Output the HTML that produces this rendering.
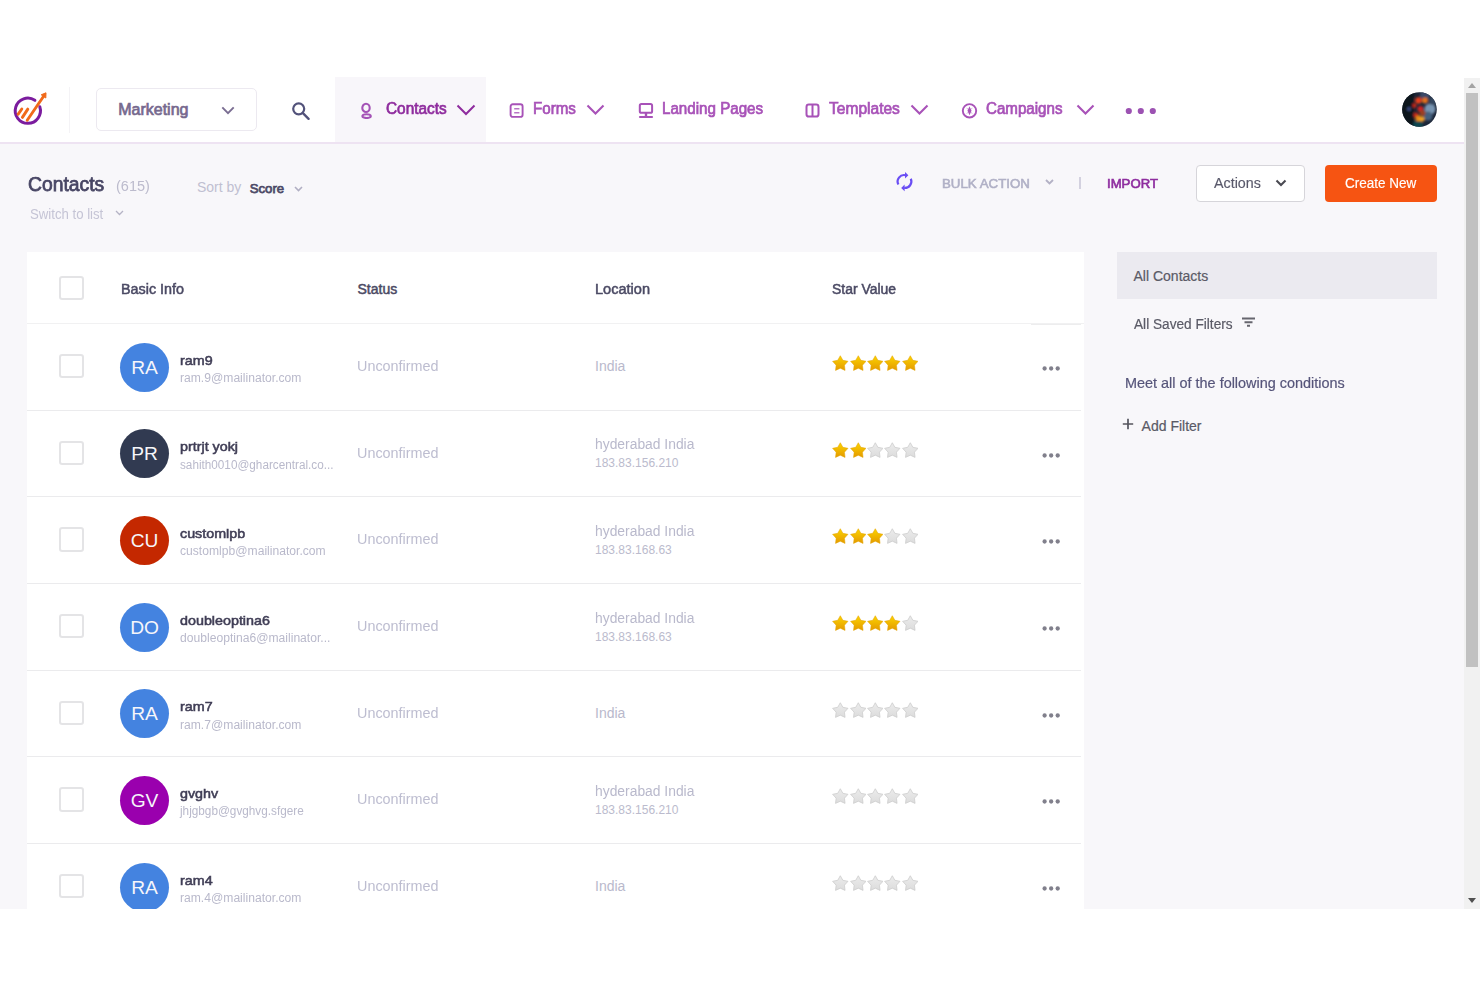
<!DOCTYPE html>
<html><head><meta charset="utf-8">
<style>
*{margin:0;padding:0;box-sizing:border-box}
html,body{width:1480px;height:987px;overflow:hidden;background:#fff;font-family:"Liberation Sans",sans-serif}
.a{position:absolute}
.t{position:absolute;white-space:nowrap}
#pg{position:absolute;left:0;top:78px;width:1464px;height:831px;background:#f8f7fa}
.cb{position:absolute;left:59.2px;width:24.4px;height:24.4px;border:2.2px solid #e4e4e6;border-radius:3.2px;background:#fff}
.av{position:absolute;left:120px;width:49px;height:49px;border-radius:50%;color:#f6f6fa;font-size:19.2px;text-align:center;line-height:50.5px;letter-spacing:-0.1px}
</style></head><body>
<svg width="0" height="0" style="position:absolute"><defs>
<linearGradient id="gold" x1="0" y1="0" x2="0" y2="1"><stop offset="0" stop-color="#fcd400"/><stop offset="1" stop-color="#e49a00"/></linearGradient>
<linearGradient id="grey" x1="0" y1="0" x2="0" y2="1"><stop offset="0" stop-color="#ececec"/><stop offset="1" stop-color="#dcdcdc"/></linearGradient>
</defs></svg>
<div id="pg"></div>
<div class="a" style="left:0;top:78px;width:1464px;height:64px;background:#fff"></div>
<div class="a" style="left:0;top:142px;width:1464px;height:1.6px;background:#eee3f2"></div>
<svg class="a" style="left:11.2px;top:92px" width="36" height="36" viewBox="0 0 36 36">
 <path d="M23.9 8.3 A12.6 12.6 0 1 0 28.8 14.8" fill="none" stroke="#7b1c9e" stroke-width="3" stroke-linecap="round"/>
 <path d="M7.2 22.2 L10.8 17 M11.4 25.4 L16.8 17.1 M16.2 28.2 L32.8 4" stroke="#f06a1a" stroke-width="2.9" stroke-linecap="round"/>
 <path d="M35 0.8 L34.8 6 L30.2 2.8 Z" fill="#f06a1a" stroke="#f06a1a" stroke-width="1" stroke-linejoin="round"/>
</svg>
<div class="a" style="left:69px;top:87px;width:1px;height:46px;background:#f4f3f6"></div>
<div class="a" style="left:96px;top:88px;width:161px;height:43px;border:1.5px solid #ece9f0;border-radius:5px;background:#fff"></div>
<div class="t" style="left:118.2px;top:100.86px;font-size:16px;line-height:18.4px;font-weight:normal;color:#76698e;-webkit-text-stroke:0.70px #76698e;">Marketing</div>
<svg class="a" style="left:220.5px;top:106.4px" width="15" height="9" viewBox="0 0 15 9"><path d="M1.3 1.3 L7 7.2 L12.7 1.3" fill="none" stroke="#7a6d92" stroke-width="1.9"/></svg>
<svg class="a" style="left:291px;top:102px" width="20" height="19" viewBox="0 0 20 19"><circle cx="7.7" cy="6.8" r="5.5" fill="none" stroke="#52527a" stroke-width="2.2"/><path d="M11.9 11.2 L17.6 16.8" stroke="#52527a" stroke-width="2.4" stroke-linecap="round"/></svg>
<div class="a" style="left:335px;top:77px;width:151px;height:65px;background:#f8f6fa"></div>
<svg class="a" style="left:360px;top:102px" width="13" height="17" viewBox="0 0 13 17"><ellipse cx="6" cy="5.9" rx="3.7" ry="4.1" fill="none" stroke="#a452b6" stroke-width="2.1"/><ellipse cx="6.6" cy="14.1" rx="4.2" ry="1.9" fill="none" stroke="#a452b6" stroke-width="2.1"/></svg>
<div class="t" style="left:386px;top:100.26px;font-size:16px;line-height:18.4px;font-weight:normal;color:#8f2c9e;transform:scaleX(0.96);transform-origin:0 0;-webkit-text-stroke:0.70px #8f2c9e;">Contacts</div>
<svg class="a" style="left:456px;top:104px" width="20" height="12" viewBox="0 0 20 12"><path d="M1.5 1.5 L10 10 L18.5 1.5" fill="none" stroke="#8f2c9e" stroke-width="2"/></svg>
<svg class="a" style="left:509px;top:103px" width="15" height="15" viewBox="0 0 15 15"><rect x="1.6" y="1.3" width="12" height="12.6" rx="2.2" fill="none" stroke="#a852b8" stroke-width="1.9"/><path d="M5.2 5.7h5.2M5.2 9.7h5.2" stroke="#a852b8" stroke-width="1.4" opacity=".8"/></svg>
<div class="t" style="left:532.8px;top:100.26px;font-size:16px;line-height:18.4px;font-weight:normal;color:#a852b8;transform:scaleX(0.945);transform-origin:0 0;-webkit-text-stroke:0.70px #a852b8;">Forms</div>
<svg class="a" style="left:586px;top:104.4px" width="19" height="11" viewBox="0 0 19 11"><path d="M1.5 1.5 L9.5 9.5 L17.5 1.5" fill="none" stroke="#a852b8" stroke-width="2.1"/></svg>
<svg class="a" style="left:637px;top:103px" width="17" height="16" viewBox="0 0 17 16"><rect x="2.8" y="1.1" width="12.3" height="8.7" rx="1.6" fill="none" stroke="#a852b8" stroke-width="2"/><path d="M9 10v3.5" stroke="#a852b8" stroke-width="2.4"/><path d="M3 14H15" stroke="#a852b8" stroke-width="2.2" stroke-linecap="round"/></svg>
<div class="t" style="left:661.6px;top:100.26px;font-size:16px;line-height:18.4px;font-weight:normal;color:#a852b8;transform:scaleX(0.947);transform-origin:0 0;-webkit-text-stroke:0.70px #a852b8;">Landing Pages</div>
<svg class="a" style="left:805px;top:103px" width="15" height="15" viewBox="0 0 15 15"><rect x="1.5" y="1.6" width="12" height="12" rx="2.4" fill="none" stroke="#a852b8" stroke-width="2"/><path d="M7.5 1.6v12" stroke="#a852b8" stroke-width="2"/></svg>
<div class="t" style="left:829px;top:100.26px;font-size:16px;line-height:18.4px;font-weight:normal;color:#a852b8;transform:scaleX(0.972);transform-origin:0 0;-webkit-text-stroke:0.70px #a852b8;">Templates</div>
<svg class="a" style="left:910px;top:104.4px" width="19" height="11" viewBox="0 0 19 11"><path d="M1.5 1.5 L9.5 9.5 L17.5 1.5" fill="none" stroke="#a852b8" stroke-width="2.1"/></svg>
<svg class="a" style="left:961px;top:102px" width="17" height="17" viewBox="0 0 17 17"><circle cx="8.5" cy="8.8" r="6.7" fill="none" stroke="#a852b8" stroke-width="1.9"/><path d="M8.5 4.3L10.5 8.8 8.5 13.3 6.5 8.8Z" fill="#a852b8"/><path d="M5.6 6.2l2 1.2M11.4 6.2l-2 1.2M5.6 11.4l2-1.2M11.4 11.4l-2-1.2" stroke="#a852b8" stroke-width="1" opacity=".45"/></svg>
<div class="t" style="left:986px;top:100.26px;font-size:16px;line-height:18.4px;font-weight:normal;color:#a852b8;transform:scaleX(0.945);transform-origin:0 0;-webkit-text-stroke:0.70px #a852b8;">Campaigns</div>
<svg class="a" style="left:1076px;top:104.4px" width="19" height="11" viewBox="0 0 19 11"><path d="M1.5 1.5 L9.5 9.5 L17.5 1.5" fill="none" stroke="#a852b8" stroke-width="2.1"/></svg>
<svg class="a" style="left:1125px;top:106.8px" width="33" height="8" viewBox="0 0 33 8"><circle cx="3.8" cy="4" r="3.1" fill="#9c52b2"/><circle cx="15.8" cy="4" r="3.1" fill="#9c52b2"/><circle cx="27.8" cy="4" r="3.1" fill="#9c52b2"/></svg>
<svg class="a" style="left:1402px;top:92.3px" width="35" height="35" viewBox="0 0 35 35">
 <defs><clipPath id="ac"><circle cx="17.5" cy="17.5" r="17.3"/></clipPath><filter id="bl" x="-20%" y="-20%" width="140%" height="140%"><feGaussianBlur stdDeviation="1.3"/></filter></defs>
 <g clip-path="url(#ac)"><rect width="35" height="35" fill="#1d2638"/>
 <g filter="url(#bl)">
 <rect x="-2" y="-2" width="14" height="40" fill="#0e131f"/>
 <circle cx="23" cy="3" r="5" fill="#3a4a68"/>
 <circle cx="28" cy="17" r="5.5" fill="#7895b2"/><circle cx="26" cy="24" r="4.5" fill="#45617e"/><circle cx="31" cy="9" r="4" fill="#34465e"/>
 <circle cx="16" cy="33" r="5" fill="#0f4750"/><circle cx="7" cy="17" r="2" fill="#3a4a80"/>
 <circle cx="16.5" cy="8.5" r="3.2" fill="#e8401a"/><circle cx="23" cy="8.5" r="3" fill="#e2701c"/>
 <circle cx="12.5" cy="13.5" r="2.2" fill="#c02818"/><circle cx="18.5" cy="17" r="3" fill="#d02020"/>
 <circle cx="20.5" cy="21" r="3" fill="#9c4022"/><circle cx="14" cy="23" r="2.6" fill="#c42a18"/>
 <circle cx="16.5" cy="26.5" r="3" fill="#e88a18"/><circle cx="20" cy="27" r="2.6" fill="#f0a020"/>
 </g></g>
</svg>
<div class="t" style="left:27.8px;top:172.73px;font-size:19.5px;line-height:22.42px;font-weight:normal;color:#474564;transform:scaleX(0.99);transform-origin:0 0;-webkit-text-stroke:0.75px #474564;">Contacts</div>
<div class="t" style="left:116.2px;top:177.90px;font-size:14px;line-height:16.1px;font-weight:normal;color:#bcbbcd;transform:scaleX(1.035);transform-origin:0 0;">(615)</div>
<div class="t" style="left:197px;top:179.40px;font-size:14px;line-height:16.1px;font-weight:normal;color:#c0bfd1;">Sort by</div>
<div class="t" style="left:249.7px;top:180.64px;font-size:13.2px;line-height:15.18px;font-weight:normal;color:#4d4b68;-webkit-text-stroke:0.75px #4d4b68;">Score</div>
<svg class="a" style="left:294px;top:186.2px" width="9" height="6" viewBox="0 0 9 6"><path d="M1 1l3.5 3.5L8 1" fill="none" stroke="#b1afc3" stroke-width="1.6"/></svg>
<div class="t" style="left:29.8px;top:205.50px;font-size:14px;line-height:16.1px;font-weight:normal;color:#c5c4d5;transform:scaleX(0.942);transform-origin:0 0;">Switch to list</div>
<svg class="a" style="left:114.5px;top:210px" width="9" height="6" viewBox="0 0 9 6"><path d="M1 1l3.5 3.5L8 1" fill="none" stroke="#b5b3c5" stroke-width="1.3"/></svg>
<svg class="a" style="left:895px;top:171px" width="20" height="22" viewBox="0 0 20 22"><path d="M3.4 13.6A6.5 6.5 0 0 1 10.6 4.2" fill="none" stroke="#6a4ef4" stroke-width="2.2"/><path d="M15.8 7.8A6.5 6.5 0 0 1 9.2 16.9" fill="none" stroke="#6a4ef4" stroke-width="2.2"/><path d="M10 0.9L13.4 4.2 10 7.5Z" fill="#6a4ef4"/><path d="M9.6 13.6L6.2 16.9 9.6 20.2Z" fill="#6a4ef4"/></svg>
<div class="t" style="left:942.3px;top:175.86px;font-size:13.5px;line-height:15.52px;font-weight:normal;color:#b0b0c6;transform:scaleX(0.985);transform-origin:0 0;-webkit-text-stroke:0.60px #b0b0c6;">BULK ACTION</div>
<svg class="a" style="left:1045px;top:179px" width="9" height="6" viewBox="0 0 9 6"><path d="M1 1l3.5 3.5L8 1" fill="none" stroke="#b3b1c5" stroke-width="1.8"/></svg>
<div class="a" style="left:1079.2px;top:177px;width:1.8px;height:11.5px;background:#d3d1df"></div>
<div class="t" style="left:1106.8px;top:175.66px;font-size:13.5px;line-height:15.52px;font-weight:normal;color:#8e2d9f;transform:scaleX(0.975);transform-origin:0 0;-webkit-text-stroke:0.65px #8e2d9f;">IMPORT</div>
<div class="a" style="left:1195.5px;top:165px;width:109.5px;height:36.5px;border:1.8px solid #d6d5da;border-radius:4px;background:#fff"></div>
<div class="t" style="left:1214px;top:175.10px;font-size:14px;line-height:16.1px;font-weight:normal;color:#58586a;transform:scaleX(1.02);transform-origin:0 0;-webkit-text-stroke:0.15px #58586a;">Actions</div>
<svg class="a" style="left:1275px;top:179px" width="12" height="8" viewBox="0 0 12 8"><path d="M1.5 1.5l4.5 4.5 4.5-4.5" fill="none" stroke="#4a4a52" stroke-width="2.1"/></svg>
<div class="a" style="left:1325px;top:165px;width:111.5px;height:36.5px;border-radius:4px;background:#f65412"></div>
<div class="t" style="left:1344.7px;top:175.10px;font-size:14px;line-height:16.1px;font-weight:normal;color:#ffffff;transform:scaleX(0.965);transform-origin:0 0;-webkit-text-stroke:0.15px #ffffff;">Create New</div>
<div class="a" style="left:27px;top:252px;width:1057px;height:657px;background:#fff"></div>
<div class="a" style="left:27px;top:322.8px;width:1057px;height:1.4px;background:#f1f1f2"></div>
<div class="a" style="left:1031px;top:323.6px;width:50px;height:1.6px;background:#ededee"></div>
<div class="cb" style="top:275.5px"></div>
<div class="t" style="left:120.5px;top:280.70px;font-size:14px;line-height:16.1px;font-weight:normal;color:#4b4a64;transform:scaleX(1.025);transform-origin:0 0;-webkit-text-stroke:0.50px #4b4a64;">Basic Info</div>
<div class="t" style="left:357.5px;top:280.70px;font-size:14px;line-height:16.1px;font-weight:normal;color:#4b4a64;-webkit-text-stroke:0.50px #4b4a64;">Status</div>
<div class="t" style="left:595px;top:280.70px;font-size:14px;line-height:16.1px;font-weight:normal;color:#4b4a64;transform:scaleX(1.04);transform-origin:0 0;-webkit-text-stroke:0.50px #4b4a64;">Location</div>
<div class="t" style="left:832.2px;top:280.70px;font-size:14px;line-height:16.1px;font-weight:normal;color:#4b4a64;transform:scaleX(0.995);transform-origin:0 0;-webkit-text-stroke:0.50px #4b4a64;">Star Value</div>
<div class="cb" style="top:354.00px"></div>
<div class="av" style="top:342.50px;background:#4483e0">RA</div>
<div class="t" style="left:180px;top:352.66px;font-size:13.5px;line-height:15.52px;font-weight:normal;color:#403e56;transform:scaleX(1.06);transform-origin:0 0;-webkit-text-stroke:0.55px #403e56;">ram9</div>
<div class="t" style="left:180px;top:372.04px;font-size:12px;line-height:13.8px;font-weight:normal;color:#b9b9cb;transform:scaleX(1.01);transform-origin:0 0;">ram.9@mailinator.com</div>
<div class="t" style="left:356.6px;top:358.10px;font-size:14px;line-height:16.1px;font-weight:normal;color:#bdbdd0;transform:scaleX(1.027);transform-origin:0 0;">Unconfirmed</div>
<div class="t" style="left:595px;top:358.10px;font-size:14px;line-height:16.1px;font-weight:normal;color:#b9b9cc;">India</div>
<svg class="a" style="left:832.2px;top:354.8px" width="16.6" height="16" viewBox="0 0 24 23"><path d="M12.00 1.00 L15.70 7.60 L23.13 9.08 L17.99 14.65 L18.88 22.17 L12.00 19.00 L5.12 22.17 L6.01 14.65 L0.87 9.08 L8.30 7.60Z" fill="url(#gold)" stroke="#e3a400" stroke-width=".8" stroke-linejoin="round"/></svg>
<svg class="a" style="left:849.5px;top:354.8px" width="16.6" height="16" viewBox="0 0 24 23"><path d="M12.00 1.00 L15.70 7.60 L23.13 9.08 L17.99 14.65 L18.88 22.17 L12.00 19.00 L5.12 22.17 L6.01 14.65 L0.87 9.08 L8.30 7.60Z" fill="url(#gold)" stroke="#e3a400" stroke-width=".8" stroke-linejoin="round"/></svg>
<svg class="a" style="left:866.9px;top:354.8px" width="16.6" height="16" viewBox="0 0 24 23"><path d="M12.00 1.00 L15.70 7.60 L23.13 9.08 L17.99 14.65 L18.88 22.17 L12.00 19.00 L5.12 22.17 L6.01 14.65 L0.87 9.08 L8.30 7.60Z" fill="url(#gold)" stroke="#e3a400" stroke-width=".8" stroke-linejoin="round"/></svg>
<svg class="a" style="left:884.2px;top:354.8px" width="16.6" height="16" viewBox="0 0 24 23"><path d="M12.00 1.00 L15.70 7.60 L23.13 9.08 L17.99 14.65 L18.88 22.17 L12.00 19.00 L5.12 22.17 L6.01 14.65 L0.87 9.08 L8.30 7.60Z" fill="url(#gold)" stroke="#e3a400" stroke-width=".8" stroke-linejoin="round"/></svg>
<svg class="a" style="left:901.5px;top:354.8px" width="16.6" height="16" viewBox="0 0 24 23"><path d="M12.00 1.00 L15.70 7.60 L23.13 9.08 L17.99 14.65 L18.88 22.17 L12.00 19.00 L5.12 22.17 L6.01 14.65 L0.87 9.08 L8.30 7.60Z" fill="url(#gold)" stroke="#e3a400" stroke-width=".8" stroke-linejoin="round"/></svg>
<svg class="a" style="left:1042px;top:365.90px" width="19" height="5" viewBox="0 0 19 5"><circle cx="2.6" cy="2.5" r="2.15" fill="#81808c"/><circle cx="9.15" cy="2.5" r="2.15" fill="#81808c"/><circle cx="15.7" cy="2.5" r="2.15" fill="#81808c"/></svg>
<div class="a" style="left:27px;top:410px;width:1054px;height:1px;background:#ebebed"></div>
<div class="cb" style="top:440.67px"></div>
<div class="av" style="top:429.17px;background:#313a51">PR</div>
<div class="t" style="left:180px;top:439.33px;font-size:13.5px;line-height:15.52px;font-weight:normal;color:#403e56;transform:scaleX(1.06);transform-origin:0 0;-webkit-text-stroke:0.55px #403e56;">prtrjt yokj</div>
<div class="t" style="left:180px;top:458.71px;font-size:12px;line-height:13.8px;font-weight:normal;color:#b9b9cb;transform:scaleX(0.978);transform-origin:0 0;">sahith0010@gharcentral.co...</div>
<div class="t" style="left:356.6px;top:444.77px;font-size:14px;line-height:16.1px;font-weight:normal;color:#bdbdd0;transform:scaleX(1.027);transform-origin:0 0;">Unconfirmed</div>
<div class="t" style="left:594.6px;top:436.40px;font-size:14px;line-height:16.1px;font-weight:normal;color:#b9b9cc;transform:scaleX(0.99);transform-origin:0 0;">hyderabad India</div>
<div class="t" style="left:595px;top:457.24px;font-size:12px;line-height:13.8px;font-weight:normal;color:#bbbbcd;">183.83.156.210</div>
<svg class="a" style="left:832.2px;top:441.5px" width="16.6" height="16" viewBox="0 0 24 23"><path d="M12.00 1.00 L15.70 7.60 L23.13 9.08 L17.99 14.65 L18.88 22.17 L12.00 19.00 L5.12 22.17 L6.01 14.65 L0.87 9.08 L8.30 7.60Z" fill="url(#gold)" stroke="#e3a400" stroke-width=".8" stroke-linejoin="round"/></svg>
<svg class="a" style="left:849.5px;top:441.5px" width="16.6" height="16" viewBox="0 0 24 23"><path d="M12.00 1.00 L15.70 7.60 L23.13 9.08 L17.99 14.65 L18.88 22.17 L12.00 19.00 L5.12 22.17 L6.01 14.65 L0.87 9.08 L8.30 7.60Z" fill="url(#gold)" stroke="#e3a400" stroke-width=".8" stroke-linejoin="round"/></svg>
<svg class="a" style="left:866.9px;top:441.5px" width="16.6" height="16" viewBox="0 0 24 23"><path d="M12.00 1.00 L15.70 7.60 L23.13 9.08 L17.99 14.65 L18.88 22.17 L12.00 19.00 L5.12 22.17 L6.01 14.65 L0.87 9.08 L8.30 7.60Z" fill="url(#grey)" stroke="#cbcbcb" stroke-width="1.1" stroke-linejoin="round"/></svg>
<svg class="a" style="left:884.2px;top:441.5px" width="16.6" height="16" viewBox="0 0 24 23"><path d="M12.00 1.00 L15.70 7.60 L23.13 9.08 L17.99 14.65 L18.88 22.17 L12.00 19.00 L5.12 22.17 L6.01 14.65 L0.87 9.08 L8.30 7.60Z" fill="url(#grey)" stroke="#cbcbcb" stroke-width="1.1" stroke-linejoin="round"/></svg>
<svg class="a" style="left:901.5px;top:441.5px" width="16.6" height="16" viewBox="0 0 24 23"><path d="M12.00 1.00 L15.70 7.60 L23.13 9.08 L17.99 14.65 L18.88 22.17 L12.00 19.00 L5.12 22.17 L6.01 14.65 L0.87 9.08 L8.30 7.60Z" fill="url(#grey)" stroke="#cbcbcb" stroke-width="1.1" stroke-linejoin="round"/></svg>
<svg class="a" style="left:1042px;top:452.57px" width="19" height="5" viewBox="0 0 19 5"><circle cx="2.6" cy="2.5" r="2.15" fill="#81808c"/><circle cx="9.15" cy="2.5" r="2.15" fill="#81808c"/><circle cx="15.7" cy="2.5" r="2.15" fill="#81808c"/></svg>
<div class="a" style="left:27px;top:496px;width:1054px;height:1px;background:#ebebed"></div>
<div class="cb" style="top:527.34px"></div>
<div class="av" style="top:515.84px;background:#c42800">CU</div>
<div class="t" style="left:180px;top:526.00px;font-size:13.5px;line-height:15.52px;font-weight:normal;color:#403e56;transform:scaleX(1.06);transform-origin:0 0;-webkit-text-stroke:0.55px #403e56;">customlpb</div>
<div class="t" style="left:180px;top:545.38px;font-size:12px;line-height:13.8px;font-weight:normal;color:#b9b9cb;transform:scaleX(1.01);transform-origin:0 0;">customlpb@mailinator.com</div>
<div class="t" style="left:356.6px;top:531.44px;font-size:14px;line-height:16.1px;font-weight:normal;color:#bdbdd0;transform:scaleX(1.027);transform-origin:0 0;">Unconfirmed</div>
<div class="t" style="left:594.6px;top:523.07px;font-size:14px;line-height:16.1px;font-weight:normal;color:#b9b9cc;transform:scaleX(0.99);transform-origin:0 0;">hyderabad India</div>
<div class="t" style="left:595px;top:543.91px;font-size:12px;line-height:13.8px;font-weight:normal;color:#bbbbcd;">183.83.168.63</div>
<svg class="a" style="left:832.2px;top:528.1px" width="16.6" height="16" viewBox="0 0 24 23"><path d="M12.00 1.00 L15.70 7.60 L23.13 9.08 L17.99 14.65 L18.88 22.17 L12.00 19.00 L5.12 22.17 L6.01 14.65 L0.87 9.08 L8.30 7.60Z" fill="url(#gold)" stroke="#e3a400" stroke-width=".8" stroke-linejoin="round"/></svg>
<svg class="a" style="left:849.5px;top:528.1px" width="16.6" height="16" viewBox="0 0 24 23"><path d="M12.00 1.00 L15.70 7.60 L23.13 9.08 L17.99 14.65 L18.88 22.17 L12.00 19.00 L5.12 22.17 L6.01 14.65 L0.87 9.08 L8.30 7.60Z" fill="url(#gold)" stroke="#e3a400" stroke-width=".8" stroke-linejoin="round"/></svg>
<svg class="a" style="left:866.9px;top:528.1px" width="16.6" height="16" viewBox="0 0 24 23"><path d="M12.00 1.00 L15.70 7.60 L23.13 9.08 L17.99 14.65 L18.88 22.17 L12.00 19.00 L5.12 22.17 L6.01 14.65 L0.87 9.08 L8.30 7.60Z" fill="url(#gold)" stroke="#e3a400" stroke-width=".8" stroke-linejoin="round"/></svg>
<svg class="a" style="left:884.2px;top:528.1px" width="16.6" height="16" viewBox="0 0 24 23"><path d="M12.00 1.00 L15.70 7.60 L23.13 9.08 L17.99 14.65 L18.88 22.17 L12.00 19.00 L5.12 22.17 L6.01 14.65 L0.87 9.08 L8.30 7.60Z" fill="url(#grey)" stroke="#cbcbcb" stroke-width="1.1" stroke-linejoin="round"/></svg>
<svg class="a" style="left:901.5px;top:528.1px" width="16.6" height="16" viewBox="0 0 24 23"><path d="M12.00 1.00 L15.70 7.60 L23.13 9.08 L17.99 14.65 L18.88 22.17 L12.00 19.00 L5.12 22.17 L6.01 14.65 L0.87 9.08 L8.30 7.60Z" fill="url(#grey)" stroke="#cbcbcb" stroke-width="1.1" stroke-linejoin="round"/></svg>
<svg class="a" style="left:1042px;top:539.24px" width="19" height="5" viewBox="0 0 19 5"><circle cx="2.6" cy="2.5" r="2.15" fill="#81808c"/><circle cx="9.15" cy="2.5" r="2.15" fill="#81808c"/><circle cx="15.7" cy="2.5" r="2.15" fill="#81808c"/></svg>
<div class="a" style="left:27px;top:583px;width:1054px;height:1px;background:#ebebed"></div>
<div class="cb" style="top:614.01px"></div>
<div class="av" style="top:602.51px;background:#4483e0">DO</div>
<div class="t" style="left:180px;top:612.67px;font-size:13.5px;line-height:15.52px;font-weight:normal;color:#403e56;transform:scaleX(1.06);transform-origin:0 0;-webkit-text-stroke:0.55px #403e56;">doubleoptina6</div>
<div class="t" style="left:180px;top:632.05px;font-size:12px;line-height:13.8px;font-weight:normal;color:#b9b9cb;transform:scaleX(1.01);transform-origin:0 0;">doubleoptina6@mailinator...</div>
<div class="t" style="left:356.6px;top:618.11px;font-size:14px;line-height:16.1px;font-weight:normal;color:#bdbdd0;transform:scaleX(1.027);transform-origin:0 0;">Unconfirmed</div>
<div class="t" style="left:594.6px;top:609.74px;font-size:14px;line-height:16.1px;font-weight:normal;color:#b9b9cc;transform:scaleX(0.99);transform-origin:0 0;">hyderabad India</div>
<div class="t" style="left:595px;top:630.58px;font-size:12px;line-height:13.8px;font-weight:normal;color:#bbbbcd;">183.83.168.63</div>
<svg class="a" style="left:832.2px;top:614.8px" width="16.6" height="16" viewBox="0 0 24 23"><path d="M12.00 1.00 L15.70 7.60 L23.13 9.08 L17.99 14.65 L18.88 22.17 L12.00 19.00 L5.12 22.17 L6.01 14.65 L0.87 9.08 L8.30 7.60Z" fill="url(#gold)" stroke="#e3a400" stroke-width=".8" stroke-linejoin="round"/></svg>
<svg class="a" style="left:849.5px;top:614.8px" width="16.6" height="16" viewBox="0 0 24 23"><path d="M12.00 1.00 L15.70 7.60 L23.13 9.08 L17.99 14.65 L18.88 22.17 L12.00 19.00 L5.12 22.17 L6.01 14.65 L0.87 9.08 L8.30 7.60Z" fill="url(#gold)" stroke="#e3a400" stroke-width=".8" stroke-linejoin="round"/></svg>
<svg class="a" style="left:866.9px;top:614.8px" width="16.6" height="16" viewBox="0 0 24 23"><path d="M12.00 1.00 L15.70 7.60 L23.13 9.08 L17.99 14.65 L18.88 22.17 L12.00 19.00 L5.12 22.17 L6.01 14.65 L0.87 9.08 L8.30 7.60Z" fill="url(#gold)" stroke="#e3a400" stroke-width=".8" stroke-linejoin="round"/></svg>
<svg class="a" style="left:884.2px;top:614.8px" width="16.6" height="16" viewBox="0 0 24 23"><path d="M12.00 1.00 L15.70 7.60 L23.13 9.08 L17.99 14.65 L18.88 22.17 L12.00 19.00 L5.12 22.17 L6.01 14.65 L0.87 9.08 L8.30 7.60Z" fill="url(#gold)" stroke="#e3a400" stroke-width=".8" stroke-linejoin="round"/></svg>
<svg class="a" style="left:901.5px;top:614.8px" width="16.6" height="16" viewBox="0 0 24 23"><path d="M12.00 1.00 L15.70 7.60 L23.13 9.08 L17.99 14.65 L18.88 22.17 L12.00 19.00 L5.12 22.17 L6.01 14.65 L0.87 9.08 L8.30 7.60Z" fill="url(#grey)" stroke="#cbcbcb" stroke-width="1.1" stroke-linejoin="round"/></svg>
<svg class="a" style="left:1042px;top:625.91px" width="19" height="5" viewBox="0 0 19 5"><circle cx="2.6" cy="2.5" r="2.15" fill="#81808c"/><circle cx="9.15" cy="2.5" r="2.15" fill="#81808c"/><circle cx="15.7" cy="2.5" r="2.15" fill="#81808c"/></svg>
<div class="a" style="left:27px;top:670px;width:1054px;height:1px;background:#ebebed"></div>
<div class="cb" style="top:700.68px"></div>
<div class="av" style="top:689.18px;background:#4483e0">RA</div>
<div class="t" style="left:180px;top:699.34px;font-size:13.5px;line-height:15.52px;font-weight:normal;color:#403e56;transform:scaleX(1.06);transform-origin:0 0;-webkit-text-stroke:0.55px #403e56;">ram7</div>
<div class="t" style="left:180px;top:718.72px;font-size:12px;line-height:13.8px;font-weight:normal;color:#b9b9cb;transform:scaleX(1.01);transform-origin:0 0;">ram.7@mailinator.com</div>
<div class="t" style="left:356.6px;top:704.78px;font-size:14px;line-height:16.1px;font-weight:normal;color:#bdbdd0;transform:scaleX(1.027);transform-origin:0 0;">Unconfirmed</div>
<div class="t" style="left:595px;top:704.78px;font-size:14px;line-height:16.1px;font-weight:normal;color:#b9b9cc;">India</div>
<svg class="a" style="left:832.2px;top:701.5px" width="16.6" height="16" viewBox="0 0 24 23"><path d="M12.00 1.00 L15.70 7.60 L23.13 9.08 L17.99 14.65 L18.88 22.17 L12.00 19.00 L5.12 22.17 L6.01 14.65 L0.87 9.08 L8.30 7.60Z" fill="url(#grey)" stroke="#cbcbcb" stroke-width="1.1" stroke-linejoin="round"/></svg>
<svg class="a" style="left:849.5px;top:701.5px" width="16.6" height="16" viewBox="0 0 24 23"><path d="M12.00 1.00 L15.70 7.60 L23.13 9.08 L17.99 14.65 L18.88 22.17 L12.00 19.00 L5.12 22.17 L6.01 14.65 L0.87 9.08 L8.30 7.60Z" fill="url(#grey)" stroke="#cbcbcb" stroke-width="1.1" stroke-linejoin="round"/></svg>
<svg class="a" style="left:866.9px;top:701.5px" width="16.6" height="16" viewBox="0 0 24 23"><path d="M12.00 1.00 L15.70 7.60 L23.13 9.08 L17.99 14.65 L18.88 22.17 L12.00 19.00 L5.12 22.17 L6.01 14.65 L0.87 9.08 L8.30 7.60Z" fill="url(#grey)" stroke="#cbcbcb" stroke-width="1.1" stroke-linejoin="round"/></svg>
<svg class="a" style="left:884.2px;top:701.5px" width="16.6" height="16" viewBox="0 0 24 23"><path d="M12.00 1.00 L15.70 7.60 L23.13 9.08 L17.99 14.65 L18.88 22.17 L12.00 19.00 L5.12 22.17 L6.01 14.65 L0.87 9.08 L8.30 7.60Z" fill="url(#grey)" stroke="#cbcbcb" stroke-width="1.1" stroke-linejoin="round"/></svg>
<svg class="a" style="left:901.5px;top:701.5px" width="16.6" height="16" viewBox="0 0 24 23"><path d="M12.00 1.00 L15.70 7.60 L23.13 9.08 L17.99 14.65 L18.88 22.17 L12.00 19.00 L5.12 22.17 L6.01 14.65 L0.87 9.08 L8.30 7.60Z" fill="url(#grey)" stroke="#cbcbcb" stroke-width="1.1" stroke-linejoin="round"/></svg>
<svg class="a" style="left:1042px;top:712.58px" width="19" height="5" viewBox="0 0 19 5"><circle cx="2.6" cy="2.5" r="2.15" fill="#81808c"/><circle cx="9.15" cy="2.5" r="2.15" fill="#81808c"/><circle cx="15.7" cy="2.5" r="2.15" fill="#81808c"/></svg>
<div class="a" style="left:27px;top:756px;width:1054px;height:1px;background:#ebebed"></div>
<div class="cb" style="top:787.35px"></div>
<div class="av" style="top:775.85px;background:#9a00ae">GV</div>
<div class="t" style="left:180px;top:786.01px;font-size:13.5px;line-height:15.52px;font-weight:normal;color:#403e56;transform:scaleX(1.06);transform-origin:0 0;-webkit-text-stroke:0.55px #403e56;">gvghv</div>
<div class="t" style="left:180px;top:805.39px;font-size:12px;line-height:13.8px;font-weight:normal;color:#b9b9cb;transform:scaleX(0.98);transform-origin:0 0;">jhjgbgb@gvghvg.sfgere</div>
<div class="t" style="left:356.6px;top:791.45px;font-size:14px;line-height:16.1px;font-weight:normal;color:#bdbdd0;transform:scaleX(1.027);transform-origin:0 0;">Unconfirmed</div>
<div class="t" style="left:594.6px;top:783.08px;font-size:14px;line-height:16.1px;font-weight:normal;color:#b9b9cc;transform:scaleX(0.99);transform-origin:0 0;">hyderabad India</div>
<div class="t" style="left:595px;top:803.92px;font-size:12px;line-height:13.8px;font-weight:normal;color:#bbbbcd;">183.83.156.210</div>
<svg class="a" style="left:832.2px;top:788.1px" width="16.6" height="16" viewBox="0 0 24 23"><path d="M12.00 1.00 L15.70 7.60 L23.13 9.08 L17.99 14.65 L18.88 22.17 L12.00 19.00 L5.12 22.17 L6.01 14.65 L0.87 9.08 L8.30 7.60Z" fill="url(#grey)" stroke="#cbcbcb" stroke-width="1.1" stroke-linejoin="round"/></svg>
<svg class="a" style="left:849.5px;top:788.1px" width="16.6" height="16" viewBox="0 0 24 23"><path d="M12.00 1.00 L15.70 7.60 L23.13 9.08 L17.99 14.65 L18.88 22.17 L12.00 19.00 L5.12 22.17 L6.01 14.65 L0.87 9.08 L8.30 7.60Z" fill="url(#grey)" stroke="#cbcbcb" stroke-width="1.1" stroke-linejoin="round"/></svg>
<svg class="a" style="left:866.9px;top:788.1px" width="16.6" height="16" viewBox="0 0 24 23"><path d="M12.00 1.00 L15.70 7.60 L23.13 9.08 L17.99 14.65 L18.88 22.17 L12.00 19.00 L5.12 22.17 L6.01 14.65 L0.87 9.08 L8.30 7.60Z" fill="url(#grey)" stroke="#cbcbcb" stroke-width="1.1" stroke-linejoin="round"/></svg>
<svg class="a" style="left:884.2px;top:788.1px" width="16.6" height="16" viewBox="0 0 24 23"><path d="M12.00 1.00 L15.70 7.60 L23.13 9.08 L17.99 14.65 L18.88 22.17 L12.00 19.00 L5.12 22.17 L6.01 14.65 L0.87 9.08 L8.30 7.60Z" fill="url(#grey)" stroke="#cbcbcb" stroke-width="1.1" stroke-linejoin="round"/></svg>
<svg class="a" style="left:901.5px;top:788.1px" width="16.6" height="16" viewBox="0 0 24 23"><path d="M12.00 1.00 L15.70 7.60 L23.13 9.08 L17.99 14.65 L18.88 22.17 L12.00 19.00 L5.12 22.17 L6.01 14.65 L0.87 9.08 L8.30 7.60Z" fill="url(#grey)" stroke="#cbcbcb" stroke-width="1.1" stroke-linejoin="round"/></svg>
<svg class="a" style="left:1042px;top:799.25px" width="19" height="5" viewBox="0 0 19 5"><circle cx="2.6" cy="2.5" r="2.15" fill="#81808c"/><circle cx="9.15" cy="2.5" r="2.15" fill="#81808c"/><circle cx="15.7" cy="2.5" r="2.15" fill="#81808c"/></svg>
<div class="a" style="left:27px;top:843px;width:1054px;height:1px;background:#ebebed"></div>
<div class="cb" style="top:874.02px"></div>
<div class="av" style="top:862.52px;background:#4483e0">RA</div>
<div class="t" style="left:180px;top:872.68px;font-size:13.5px;line-height:15.52px;font-weight:normal;color:#403e56;transform:scaleX(1.06);transform-origin:0 0;-webkit-text-stroke:0.55px #403e56;">ram4</div>
<div class="t" style="left:180px;top:892.06px;font-size:12px;line-height:13.8px;font-weight:normal;color:#b9b9cb;transform:scaleX(1.01);transform-origin:0 0;">ram.4@mailinator.com</div>
<div class="t" style="left:356.6px;top:878.12px;font-size:14px;line-height:16.1px;font-weight:normal;color:#bdbdd0;transform:scaleX(1.027);transform-origin:0 0;">Unconfirmed</div>
<div class="t" style="left:595px;top:878.12px;font-size:14px;line-height:16.1px;font-weight:normal;color:#b9b9cc;">India</div>
<svg class="a" style="left:832.2px;top:874.8px" width="16.6" height="16" viewBox="0 0 24 23"><path d="M12.00 1.00 L15.70 7.60 L23.13 9.08 L17.99 14.65 L18.88 22.17 L12.00 19.00 L5.12 22.17 L6.01 14.65 L0.87 9.08 L8.30 7.60Z" fill="url(#grey)" stroke="#cbcbcb" stroke-width="1.1" stroke-linejoin="round"/></svg>
<svg class="a" style="left:849.5px;top:874.8px" width="16.6" height="16" viewBox="0 0 24 23"><path d="M12.00 1.00 L15.70 7.60 L23.13 9.08 L17.99 14.65 L18.88 22.17 L12.00 19.00 L5.12 22.17 L6.01 14.65 L0.87 9.08 L8.30 7.60Z" fill="url(#grey)" stroke="#cbcbcb" stroke-width="1.1" stroke-linejoin="round"/></svg>
<svg class="a" style="left:866.9px;top:874.8px" width="16.6" height="16" viewBox="0 0 24 23"><path d="M12.00 1.00 L15.70 7.60 L23.13 9.08 L17.99 14.65 L18.88 22.17 L12.00 19.00 L5.12 22.17 L6.01 14.65 L0.87 9.08 L8.30 7.60Z" fill="url(#grey)" stroke="#cbcbcb" stroke-width="1.1" stroke-linejoin="round"/></svg>
<svg class="a" style="left:884.2px;top:874.8px" width="16.6" height="16" viewBox="0 0 24 23"><path d="M12.00 1.00 L15.70 7.60 L23.13 9.08 L17.99 14.65 L18.88 22.17 L12.00 19.00 L5.12 22.17 L6.01 14.65 L0.87 9.08 L8.30 7.60Z" fill="url(#grey)" stroke="#cbcbcb" stroke-width="1.1" stroke-linejoin="round"/></svg>
<svg class="a" style="left:901.5px;top:874.8px" width="16.6" height="16" viewBox="0 0 24 23"><path d="M12.00 1.00 L15.70 7.60 L23.13 9.08 L17.99 14.65 L18.88 22.17 L12.00 19.00 L5.12 22.17 L6.01 14.65 L0.87 9.08 L8.30 7.60Z" fill="url(#grey)" stroke="#cbcbcb" stroke-width="1.1" stroke-linejoin="round"/></svg>
<svg class="a" style="left:1042px;top:885.92px" width="19" height="5" viewBox="0 0 19 5"><circle cx="2.6" cy="2.5" r="2.15" fill="#81808c"/><circle cx="9.15" cy="2.5" r="2.15" fill="#81808c"/><circle cx="15.7" cy="2.5" r="2.15" fill="#81808c"/></svg>
<div class="a" style="left:1117.4px;top:252px;width:319.6px;height:46.9px;background:#ebeaf0"></div>
<div class="t" style="left:1133.5px;top:267.60px;font-size:14px;line-height:16.1px;font-weight:normal;color:#5a5a66;-webkit-text-stroke:0.20px #5a5a66;">All Contacts</div>
<div class="t" style="left:1133.5px;top:316.30px;font-size:14px;line-height:16.1px;font-weight:normal;color:#5a5a66;transform:scaleX(0.975);transform-origin:0 0;-webkit-text-stroke:0.20px #5a5a66;">All Saved Filters</div>
<svg class="a" style="left:1241px;top:317px" width="15" height="11" viewBox="0 0 15 11"><path d="M1 1.6h13M3.5 5.2h8M6 8.8h3" stroke="#66666e" stroke-width="2"/></svg>
<div class="t" style="left:1124.6px;top:375.24px;font-size:14.5px;line-height:16.67px;font-weight:normal;color:#56557a;transform:scaleX(0.995);transform-origin:0 0;-webkit-text-stroke:0.20px #56557a;">Meet all of the following conditions</div>
<svg class="a" style="left:1122px;top:418px" width="12" height="12" viewBox="0 0 12 12"><path d="M6 .8v10.4M.8 6h10.4" stroke="#55555e" stroke-width="1.7"/></svg>
<div class="t" style="left:1141.6px;top:417.60px;font-size:14px;line-height:16.1px;font-weight:normal;color:#5a5a66;-webkit-text-stroke:0.20px #5a5a66;">Add Filter</div>
<div class="a" style="left:0;top:909px;width:1480px;height:78px;background:#fff"></div>
<div class="a" style="left:1464px;top:78px;width:16px;height:831px;background:#f1f1f1">
 <div class="a" style="left:2px;top:15px;width:12px;height:574px;background:#c1c1c1"></div>
 <svg class="a" style="left:4px;top:5px" width="8" height="5" viewBox="0 0 8 5"><path d="M0 5L4 0L8 5Z" fill="#a3a3a3"/></svg>
 <svg class="a" style="left:4px;top:820px" width="8" height="5" viewBox="0 0 8 5"><path d="M0 0L4 5L8 0Z" fill="#505050"/></svg>
</div>
</body></html>
